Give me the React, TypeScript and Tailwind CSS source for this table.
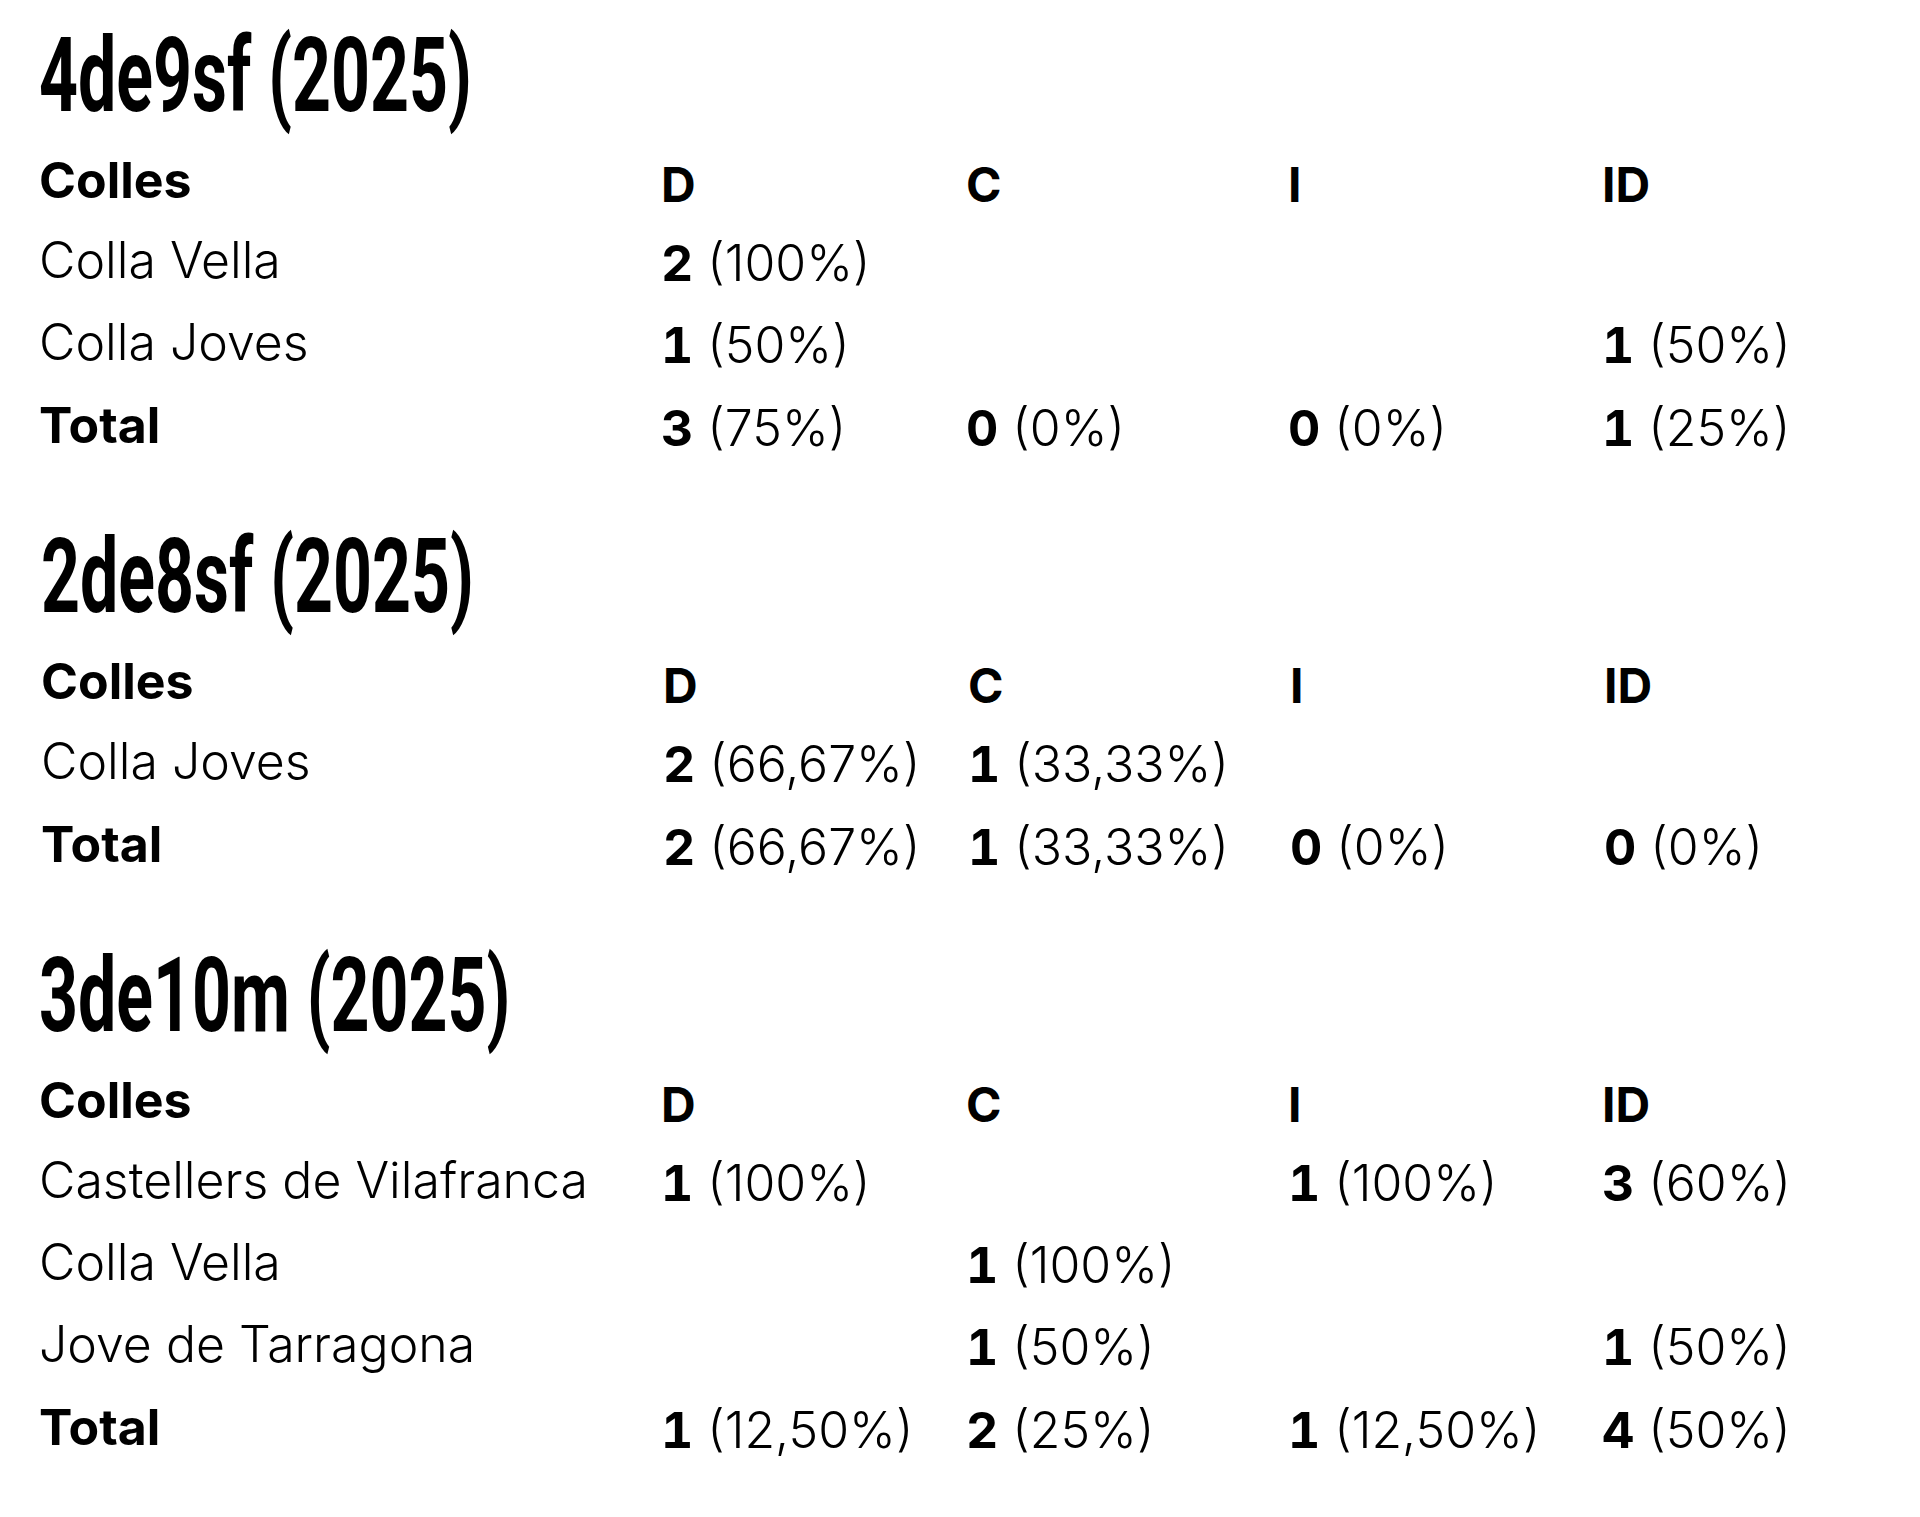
import React from 'react';

type Cell = [number, string] | null;

type Row = { name: string; cells: Cell[] };

type Section = { title: string; rows: Row[]; total: Cell[]; shift?: boolean };

const sections: Section[] = [
  {
    title: '4de9sf (2025)',
    rows: [
      { name: 'Colla Vella', cells: [[2, '100%'], null, null, null] },
      { name: 'Colla Joves', cells: [[1, '50%'], null, null, [1, '50%']] },
    ],
    total: [[3, '75%'], [0, '0%'], [0, '0%'], [1, '25%']],
  },
  {
    title: '2de8sf (2025)',
    rows: [{ name: 'Colla Joves', cells: [[2, '66,67%'], [1, '33,33%'], null, null] }],
    total: [[2, '66,67%'], [1, '33,33%'], [0, '0%'], [0, '0%']],
    shift: true,
  },
  {
    title: '3de10m (2025)',
    rows: [
      { name: 'Castellers de Vilafranca', cells: [[1, '100%'], null, [1, '100%'], [3, '60%']] },
      { name: 'Colla Vella', cells: [null, [1, '100%'], null, null] },
      { name: 'Jove de Tarragona', cells: [null, [1, '50%'], null, [1, '50%']] },
    ],
    total: [[1, '12,50%'], [2, '25%'], [1, '12,50%'], [4, '50%']],
  },
];

const cols = ['D', 'C', 'I', 'ID'];

const rowGrid = 'grid grid-cols-[622px_305px_322px_314px_1fr] leading-[82px]';

function Value({ cell, total }: { cell: Cell; total?: boolean }) {
  if (!cell) return <div />;
  return (
    <div className={['whitespace-nowrap', total ? 'pt-[4px]' : 'pt-[3px]'].join(' ')}>
      <span className="font-bold tabular-nums">{cell[0]}</span>
      <span className="ml-[14px] font-light">({cell[1]})</span>
    </div>
  );
}

function Block({ s }: { s: Section }) {
  return (
    <section className={s.shift ? 'pl-[2px]' : ''}>
      <h2 className="h-[103px] font-['Roboto',sans-serif] text-[103px] leading-[103px] font-bold mb-[12px] whitespace-nowrap">
        <span className="inline-block origin-left scale-x-[0.66]">{s.title}</span>
      </h2>

      {/* header */}
      <div className={rowGrid + ' h-[80px] font-bold'}>
        <div>Colles</div>
        {cols.map((c) => (
          <div key={c} className="text-[48px] pt-[5px]">
            {c}
          </div>
        ))}
      </div>

      {s.rows.map((r) => (
        <div key={r.name} className={rowGrid + ' h-[82px]'}>
          <div className="font-light whitespace-nowrap">{r.name}</div>
          {r.cells.map((c, i) => (
            <Value key={i} cell={c} />
          ))}
        </div>
      ))}

      <div className={rowGrid + ' h-[82px]'}>
        <div className="font-bold pt-[1px]">Total</div>
        {s.total.map((c, i) => (
          <Value key={i} cell={c} total />
        ))}
      </div>
    </section>
  );
}

export default function App() {
  return (
    <div className="min-h-screen bg-white text-black font-['Inter',sans-serif] text-[50px] pt-[24px] pl-[39px] flex flex-col gap-[60px]">
      {sections.map((s) => (
        <Block key={s.title} s={s} />
      ))}
    </div>
  );
}
